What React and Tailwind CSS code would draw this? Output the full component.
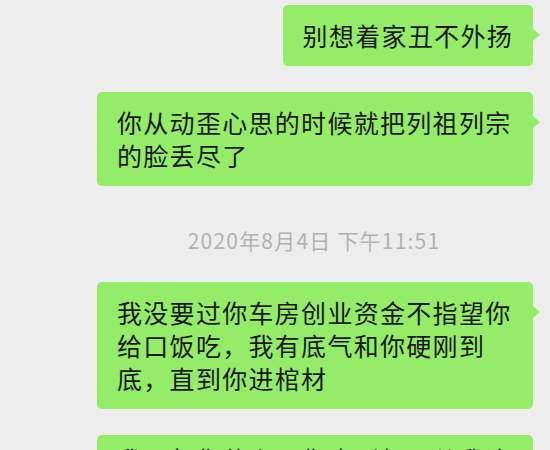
const font = { fontFamily: '"Noto Sans CJK SC", "Noto Sans", sans-serif' };

const Bubble = ({ children, className = '' }) => (
  <div className="flex justify-end pr-[17px]">
    <div
      className={`relative max-w-[436px] rounded-[5px] bg-[#95ec69] px-[20px] py-[14px] text-[25px] leading-[33px] tracking-[1.3px] text-[#191919] ${className}`}
    >
      {children}
      <span className="absolute left-full top-[24px] h-0 w-0 border-y-[6px] border-l-[7px] border-y-transparent border-l-[#95ec69]" />
    </div>
  </div>
);

export default function App() {
  return (
    <div className="h-[450px] w-[550px] overflow-hidden bg-[#ededed] pt-[5px]" style={font}>
      <Bubble>别想着家丑不外扬</Bubble>
      <div className="mt-[26px]">
        <Bubble>你从动歪心思的时候就把列祖列宗的脸丢尽了</Bubble>
      </div>
      <div className="mt-[40px] flex justify-center pl-[78px] text-[21px] leading-[28px] tracking-[1.2px] text-[#b2b2b2]">
        2020年8月4日 下午11:51
      </div>
      <div className="mt-[28px]">
        <Bubble>我没要过你车房创业资金不指望你给口饭吃，我有底气和你硬刚到底，直到你进棺材</Bubble>
      </div>
      <div className="mt-[26px]">
        <Bubble className="pt-[8px]">我不欠你什么，你也别想再从我这里拿走任何东西</Bubble>
      </div>
    </div>
  );
}
